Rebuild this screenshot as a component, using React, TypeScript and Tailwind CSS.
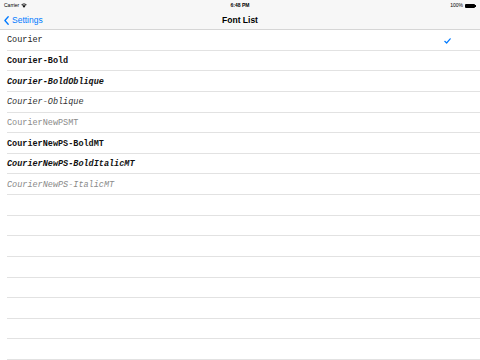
import React from "react";

const fonts = [
  { name: "Courier", cls: "font-normal not-italic text-[#222]", checked: true },
  { name: "Courier-Bold", cls: "font-bold not-italic text-[#111]" },
  { name: "Courier-BoldOblique", cls: "font-bold italic text-[#111]" },
  { name: "Courier-Oblique", cls: "font-normal italic text-[#333]" },
  { name: "CourierNewPSMT", cls: "font-normal not-italic text-[#8a8a8a]" },
  { name: "CourierNewPS-BoldMT", cls: "font-bold not-italic text-[#111]" },
  { name: "CourierNewPS-BoldItalicMT", cls: "font-bold italic text-[#111]" },
  { name: "CourierNewPS-ItalicMT", cls: "font-normal italic text-[#8a8a8a]" },
];

const emptyRows = 8;

export default function App() {
  return (
    <div className="flex h-[360px] w-[480px] flex-col overflow-hidden bg-white font-['Liberation_Sans',Arial,sans-serif]">
      <header className="flex h-[30px] shrink-0 flex-col border-b border-[#d6d6d6] bg-[#f7f7f7]">
        <div className="relative flex h-[10px] items-center justify-between px-[4px] pt-[1px] text-[5px] leading-none text-black">
          <span className="flex items-center gap-[2px]">
            Carrier
            <svg width="6" height="5" viewBox="0 0 12 9" fill="currentColor">
              <path d="M6 9 L3.6 6.3 A3.5 3.5 0 0 1 8.4 6.3 Z" />
              <path d="M2.3 4.9 A5.5 5.5 0 0 1 9.7 4.9 L8.9 5.8 A4.3 4.3 0 0 0 3.1 5.8 Z" />
              <path d="M0.6 3.2 A8 8 0 0 1 11.4 3.2 L10.6 4.1 A6.8 6.8 0 0 0 1.4 4.1 Z" />
            </svg>
          </span>
          <span className="absolute left-1/2 -translate-x-1/2 font-semibold">6:48 PM</span>
          <span className="flex items-center gap-[2px]">
            100%
            <span className="flex items-center">
              <span className="h-[4px] w-[10px] rounded-[1px] bg-black" />
              <span className="h-[2px] w-[1px] bg-black" />
            </span>
          </span>
        </div>
        <div className="relative flex flex-1 items-center pt-[1px]">
          <div className="flex items-center gap-[3px] pl-[4px] text-[8.5px] text-[#007aff]">
            <svg width="5" height="9" viewBox="0 0 5 9" fill="none" stroke="#007aff" strokeWidth="1.3" strokeLinecap="round" strokeLinejoin="round">
              <path d="M4.2 0.7 L0.9 4.5 L4.2 8.3" />
            </svg>
            <span>Settings</span>
          </div>
          <div className="absolute left-1/2 -translate-x-1/2 text-[8.5px] font-bold text-black">
            Font List
          </div>
        </div>
      </header>
      <ul className="flex flex-col font-['Liberation_Mono','Courier_New',monospace] text-[8.5px]">
        {fonts.map((f) => (
          <li key={f.name} className="flex h-[20.625px] shrink-0 flex-col pl-[7px]">
            <div className="flex flex-1 items-center justify-between pr-[29px] pt-[2px]">
              <span className={f.cls}>{f.name}</span>
              {f.checked && (
                <svg width="7" height="6" viewBox="0 0 7 6" fill="none" stroke="#007aff" strokeWidth="1.2" strokeLinecap="round" strokeLinejoin="round">
                  <path d="M0.8 3.3 L2.6 5 L6.2 0.8" />
                </svg>
              )}
            </div>
            <div className="h-px bg-[#e2e2e2]" />
          </li>
        ))}
        {Array.from({ length: emptyRows }).map((_, i) => (
          <li key={i} className="flex h-[20.625px] shrink-0 flex-col pl-[7px]">
            <div className="flex-1" />
            <div className="h-px bg-[#e2e2e2]" />
          </li>
        ))}
      </ul>
    </div>
  );
}
